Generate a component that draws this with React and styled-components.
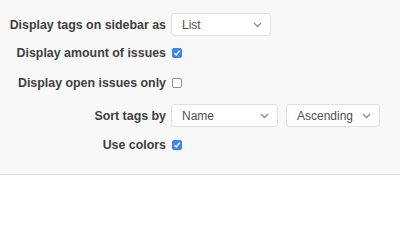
import React from "react"
import styled, { createGlobalStyle } from "styled-components"

const GlobalStyle = createGlobalStyle`
    html, body {
        margin: 0;
        padding: 0;
        background: #ffffff;
        font-family: "Liberation Sans", Arial, Helvetica, sans-serif;
    }
`

const Panel = styled.div`
    background: #f8f8f8;
    border-bottom: 1px solid #e2e2e2;
    height: 175px;
    box-sizing: border-box;
    padding-top: 13px;
`

const Form = styled.div`
    display: grid;
    grid-template-columns: 166px auto;
    column-gap: 5px;
    align-items: center;
`

const Label = styled.label`
    justify-self: end;
    font-size: 12.4px;
    font-weight: bold;
    color: #404040;
    white-space: nowrap;
    margin-top: ${(p) => p.$top || 0}px;
`

const Controls = styled.div`
    display: flex;
    align-items: center;
    gap: 8px;
    min-height: ${(p) => p.$height || 20}px;
    margin-top: ${(p) => p.$top || 0}px;
`

const SelectBox = styled.div`
    display: flex;
    align-items: center;
    justify-content: space-between;
    box-sizing: border-box;
    width: ${(p) => p.$width}px;
    height: 23px;
    padding: 0 8px 0 10px;
    background: #ffffff;
    border: 1px solid #e0e0e0;
    border-radius: 3px;
    font-size: 12px;
    color: #505050;
`

const Box = styled.span`
    display: inline-flex;
    align-items: center;
    justify-content: center;
    width: 10px;
    height: 10px;
    box-sizing: border-box;
    border-radius: 2px;
    background: ${(p) => (p.$checked ? "#3d86f0" : "#ffffff")};
    border: 1px solid ${(p) => (p.$checked ? "#3d86f0" : "#8f8f8f")};
    margin-left: 1px;
`

const Chevron = () => (
    <svg width="9" height="6" viewBox="0 0 9 6">
        <path d="M1 1 L4.5 4.5 L8 1" fill="none" stroke="#8a8a8a" strokeWidth="1.3" />
    </svg>
)

const Select = ({ value, width }) => (
    <SelectBox $width={width}>
        <span>{value}</span>
        <Chevron />
    </SelectBox>
)

const Checkbox = ({ checked }) => (
    <Box $checked={checked}>
        {checked && (
            <svg width="8" height="8" viewBox="0 0 8 8">
                <path d="M1.5 4.2 L3.3 6 L6.6 1.8" fill="none" stroke="#ffffff" strokeWidth="1.4" />
            </svg>
        )}
    </Box>
)

const App = () => {
    return (
        <>
            <GlobalStyle />
            <Panel>
                <Form>
                    <Label>Display tags on sidebar as</Label>
                    <Controls $height={23}>
                        <Select value="List" width={100} />
                    </Controls>

                    <Label $top={7}>Display amount of issues</Label>
                    <Controls $top={7}>
                        <Checkbox checked />
                    </Controls>

                    <Label $top={10}>Display open issues only</Label>
                    <Controls $top={10}>
                        <Checkbox />
                    </Controls>

                    <Label $top={11}>Sort tags by</Label>
                    <Controls $top={11} $height={23}>
                        <Select value="Name" width={107} />
                        <Select value="Ascending" width={94} />
                    </Controls>

                    <Label $top={8}>Use colors</Label>
                    <Controls $top={8}>
                        <Checkbox checked />
                    </Controls>
                </Form>
            </Panel>
        </>
    )
}

export default App
